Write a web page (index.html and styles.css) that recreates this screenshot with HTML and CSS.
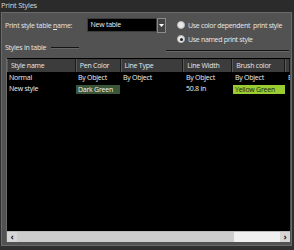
FILE: index.html
```html
<!DOCTYPE html>
<html>
<head>
<meta charset="utf-8">
<link rel="stylesheet" href="styles.css">
</head>
<body>
<div class="title">Print Styles</div>
<div class="dialog">
  <div class="top">
    <div class="left">
      <div class="name-row">
        <span class="label">Print style table <u>n</u>ame:</span>
        <span class="input">New table</span>
        <span class="drop"><svg width="5" height="3" viewBox="0 0 5 3"><path d="M0 0H5L2.5 3Z" fill="#fff"/></svg></span>
      </div>
      <div class="group-head"><span>Styles in table</span><span class="short-line"></span></div>
    </div>
    <div class="right">
      <div class="radio"><span class="dot"></span><span>Use color dependent &nbsp;print style</span></div>
      <div class="radio"><span class="dot on"></span><span>Use named print style</span></div>
      <div class="long-line"></div>
    </div>
  </div>
  <div class="table">
    <div class="thead">
      <div class="th c1">Style name</div>
      <div class="th c2">Pen Color</div>
      <div class="th c3">Line Type</div>
      <div class="th c4">Line Width</div>
      <div class="th c5">Brush color</div>
      <div class="th c6"></div>
    </div>
    <div class="tr">
      <div class="td c1">Normal</div>
      <div class="td c2">By Object</div>
      <div class="td c3">By Object</div>
      <div class="td c4">By Object</div>
      <div class="td c5">By Object</div>
      <div class="td c6">B</div>
    </div>
    <div class="tr">
      <div class="td c1">New style</div>
      <div class="td c2 green">Dark Green</div>
      <div class="td c3"></div>
      <div class="td c4">50.8 in</div>
      <div class="td c5 yellow">Yellow Green</div>
      <div class="td c6"></div>
    </div>
    <div class="spacer"></div>
    <div class="hscroll">
      <span class="arr">&#x2039;</span>
      <span class="thumb"></span>
      <span class="track"></span>
      <span class="arr">&#x203A;</span>
    </div>
  </div>
</div>
</body>
</html>
```
FILE: styles.css
```css
html, body {
  margin: 0;
  padding: 0;
  background: #2f2f2f;
  width: 294px;
  height: 250px;
  overflow: hidden;
  font-family: "Open Sans", "Noto Sans", sans-serif;
  font-size: 7px;
  letter-spacing: -0.25px;
  color: #e6e6e6;
}
.title {
  height: 12px;
  line-height: 11px;
  padding-left: 1px;
  background: #2b2b2b;
  color: #d8d8d8;
  font-size: 7.5px;
}
.dialog {
  margin-left: 1px;
  width: 289px;
  height: 232px;
  background: #525252;
  border: 1px solid #6a6a6a;
  display: flex;
  flex-direction: column;
}
.top {
  display: flex;
  height: 45px;
}
.left {
  width: 164px;
  display: flex;
  flex-direction: column;
}
.name-row {
  display: flex;
  align-items: center;
  margin-top: 5px;
  height: 14px;
}
.label {
  width: 83px;
  padding-left: 3px;
  white-space: nowrap;
}
.label u { text-decoration: underline; }
.input {
  width: 66px;
  height: 12px;
  line-height: 12px;
  background: #000;
  border: 1px solid #3c3c3c;
  padding-left: 2px;
  color: #f0f0f0;
}
.drop {
  width: 7px;
  height: 13px;
  border: 1px solid #8a8a8a;
  background: #444;
  display: flex;
  align-items: center;
  justify-content: center;
}
.group-head {
  display: flex;
  align-items: center;
  margin-top: 11px;
  padding-left: 3px;
  gap: 5px;
  white-space: nowrap;
}
.short-line {
  width: 28px;
  height: 1px;
  background: #151515;
  border-bottom: 1px solid #666;
}
.right {
  flex: 1;
  display: flex;
  flex-direction: column;
  padding-top: 5px;
}
.radio {
  display: flex;
  align-items: center;
  gap: 3px;
  height: 14px;
  padding-left: 11px;
  color: #e8e8e8;
  white-space: nowrap;
  letter-spacing: -0.32px;
}
.dot {
  width: 6px;
  height: 6px;
  border-radius: 50%;
  background: #e8e8e8;
  border: 1px solid #bdbdbd;
  display: flex;
  align-items: center;
  justify-content: center;
  flex: none;
}
.dot.on::after {
  content: "";
  width: 3px;
  height: 3px;
  border-radius: 50%;
  background: #222;
}
.long-line {
  margin-top: 4px;
  margin-right: 2px;
  height: 1px;
  background: #151515;
  border-bottom: 1px solid #666;
}
.table {
  margin: 0 1px 3px 4px;
  flex: 1;
  background: #000;
  border-left: 1px solid #6b6b6b;
  display: flex;
  flex-direction: column;
}
.thead, .tr {
  display: flex;
}
.thead {
  height: 13px;
  margin-top: 1px;
}
.th {
  background: #3c3c3c;
  border-left: 1px solid #595959;
  border-right: 1px solid #1a1a1a;
  line-height: 13px;
  padding-left: 3px;
  box-sizing: border-box;
  color: #e8e8e8;
  white-space: nowrap;
  overflow: hidden;
}
.tr { height: 11px; }
.td {
  line-height: 11px;
  padding-left: 2px;
  box-sizing: border-box;
  white-space: nowrap;
  overflow: hidden;
  color: #f0f0f0;
}
.c1 { width: 69px; }
.c2 { width: 45px; }
.c3 { width: 63px; }
.c4 { width: 49px; }
.c5 { width: 53px; }
.c6 { flex: 1; }
.td.green { background: #3a5537; margin-top: 2px; height: 9px; line-height: 9px; width: 44px; margin-right: 1px; }
.td.yellow { background: #9acd32; color: #1a1a1a; margin-top: 2px; height: 9px; line-height: 9px; width: 52px; margin-right: 1px; }
.spacer { flex: 1; }
.hscroll {
  height: 10px;
  display: flex;
  background: #d6d6d6;
  border-top: 1px solid #bbb;
}
.arr {
  width: 10px;
  color: #222;
  font-size: 9px;
  line-height: 9px;
  text-align: center;
  font-weight: bold;
}
.thumb { width: 217px; background: #cdcdcd; }
.track { flex: 1; background: #f0f0f0; }
```
